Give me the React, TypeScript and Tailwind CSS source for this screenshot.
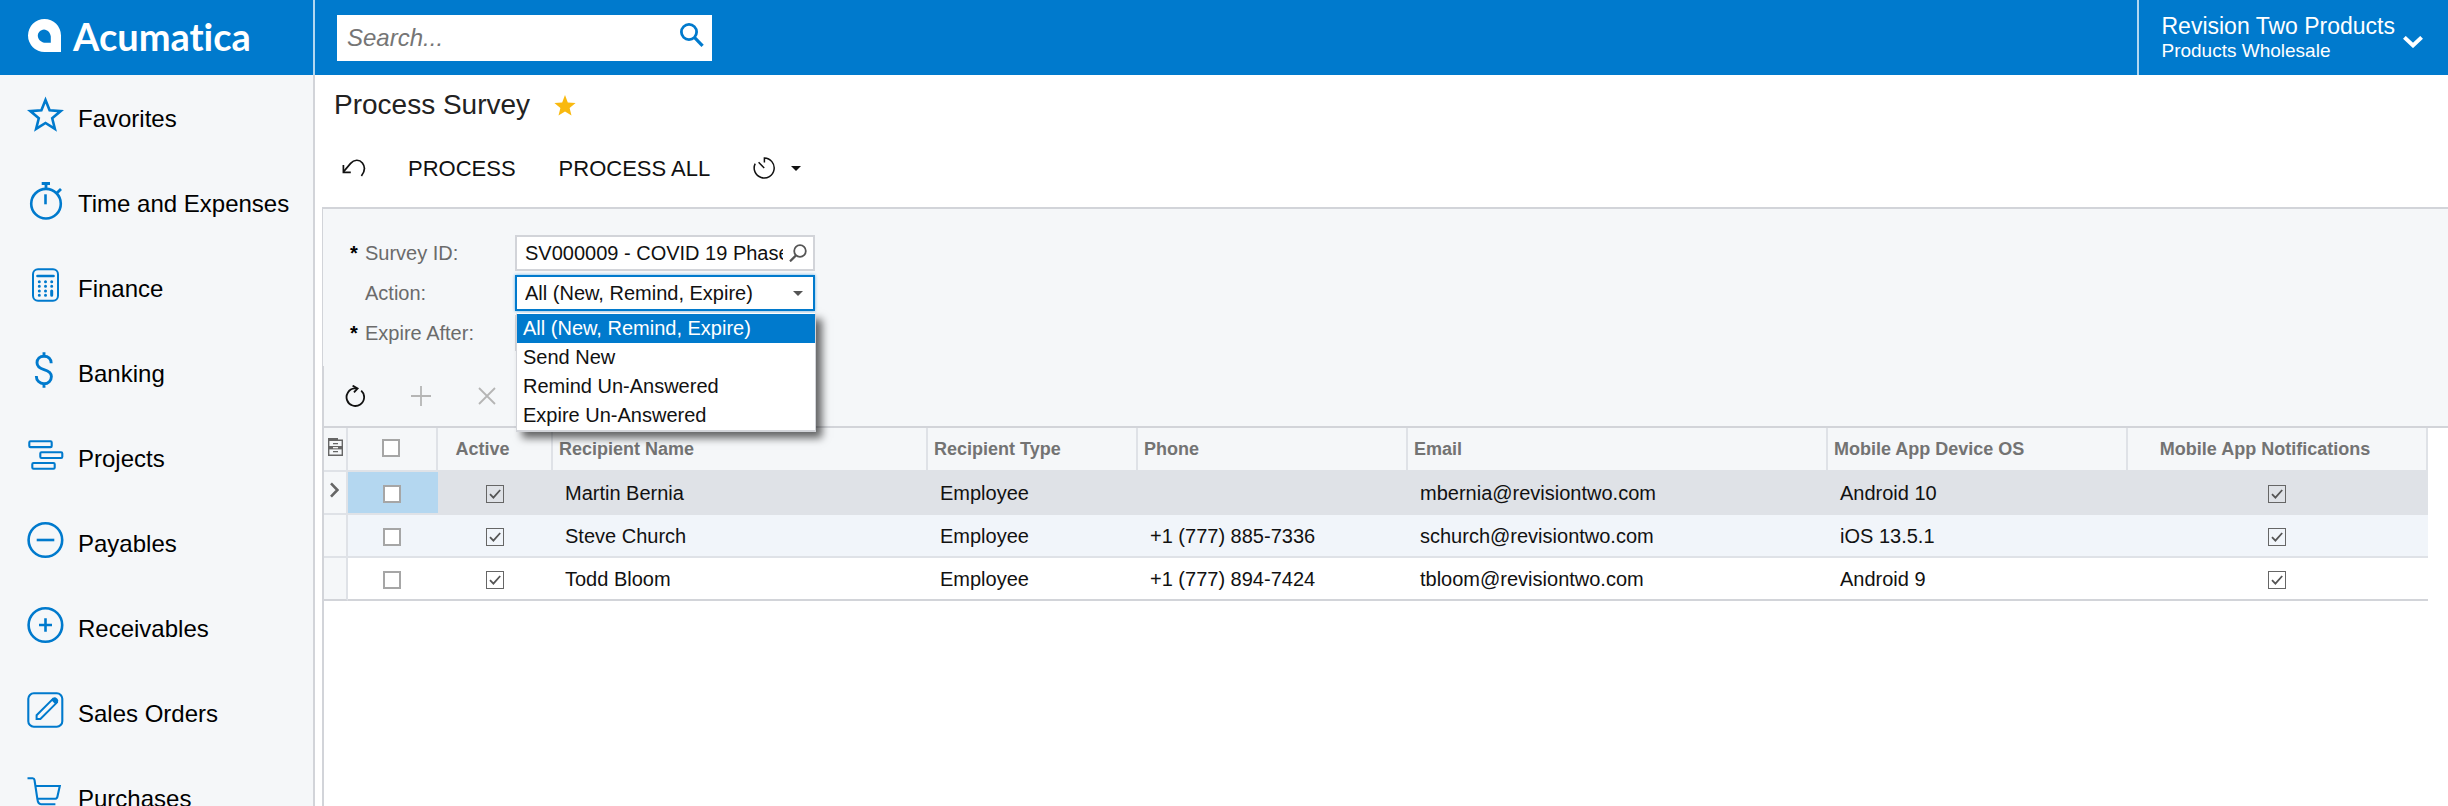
import { useState, type ReactNode } from "react";

type NavItem = { label: string; icon: ReactNode };

const navItems: NavItem[] = [
  {
    label: "Favorites",
    icon: (
      <path
        strokeWidth="2.6"
        strokeMiterlimit="10"
        d="M18.5 4L22.6 14.3L33.7 15.1L25.2 22.2L27.9 32.9L18.5 27L9.1 32.9L11.8 22.2L3.3 15.1L14.4 14.3Z"
      />
    ),
  },
  {
    label: "Time and Expenses",
    icon: (
      <>
        <circle cx="19" cy="22.7" r="14.8" />
        <path d="M14.7 2.5H23M19 2.5V8M29.7 12.3L34 8" strokeWidth="2.8" />
        <path d="M18.5 13.3V23.3" />
      </>
    ),
  },
  {
    label: "Finance",
    icon: (
      <>
        <rect x="6" y="3.3" width="25" height="31.4" rx="5" strokeWidth="2" />
        <path d="M10.5 10H26.5" strokeLinecap="round" />
        <path
          d="M12.3 15.7h.01M18.5 15.7h.01M24.7 15.7h.01M12.3 20.3h.01M18.5 20.3h.01M24.7 20.3h.01M12.3 24.9h.01M18.5 24.9h.01M24.7 24.9v4.4M12.3 29.3h.01M18.5 29.3h.01"
          strokeWidth="3"
          strokeLinecap="round"
        />
      </>
    ),
  },
  {
    label: "Banking",
    icon: (
      <path
        strokeWidth="2.9"
        d="M24.2 12.3C24.2 8 21.3 5.2 17 5.2S10 8 10 11.8C10 15.8 13 17.4 17 18.6S24.4 21.6 24.4 25.6S21.3 32.8 17 32.8S9.3 29.5 9.3 25M17 1.3V5.2M17 32.8V36.7"
      />
    ),
  },
  {
    label: "Projects",
    icon: (
      <g strokeWidth="2.1">
        <rect x="2.3" y="5.3" width="22.4" height="5.8" rx="1.2" />
        <rect x="13.3" y="16.2" width="22" height="5.8" rx="1.2" />
        <rect x="5.3" y="27" width="22.4" height="5.8" rx="1.2" />
      </g>
    ),
  },
  {
    label: "Payables",
    icon: (
      <>
        <circle cx="18.4" cy="19" r="16.8" />
        <path d="M9.7 19H27.3" />
      </>
    ),
  },
  {
    label: "Receivables",
    icon: (
      <>
        <circle cx="18.4" cy="19" r="16.8" />
        <path d="M12 19H25M18.5 12.3V25.7" />
      </>
    ),
  },
  {
    label: "Sales Orders",
    icon: (
      <>
        <rect x="1.3" y="2.3" width="34" height="33.4" rx="5.5" strokeWidth="2.1" />
        <path d="M9.6 28V24.2L26 7.8L29.8 11.6L13.4 28Z" strokeWidth="2" />
        <path d="M24.2 9L26.6 6.6Q28.2 5.6 29.8 7.2L30.6 8Q32 9.8 30.8 11.2L28.6 13.4Z" fill="currentColor" stroke="none" />
      </>
    ),
  },
  {
    label: "Purchases",
    icon: (
      <path
        strokeWidth="2.1"
        d="M.5 2.3H5.6Q7.2 2.3 7.5 4L10.4 23.2Q11 28.2 14 28.2H28.4M8.3 10H32.8L30.4 20.8Q30 22.8 28 22.8H10.3"
      />
    ),
  },
];

const actions = ["All (New, Remind, Expire)", "Send New", "Remind Un-Answered", "Expire Un-Answered"];

const recipients = [
  { name: "Martin Bernia", type: "Employee", phone: "", email: "mbernia@revisiontwo.com", os: "Android 10" },
  { name: "Steve Church", type: "Employee", phone: "+1 (777) 885-7336", email: "schurch@revisiontwo.com", os: "iOS 13.5.1" },
  { name: "Todd Bloom", type: "Employee", phone: "+1 (777) 894-7424", email: "tbloom@revisiontwo.com", os: "Android 9" },
];

const rowStyles = [
  "bg-[#dfe2e7] border-[#dfe2e7]",
  "bg-[#f1f5fa] border-[#dfe2e7]",
  "bg-white border-[#d2d4d9]",
];

function CheckBox({ label, checked = false }: { label: string; checked?: boolean }) {
  const [on, setOn] = useState(checked);
  return (
    <label className="mr-[2px] inline-grid size-[18px] align-middle">
      <input
        type="checkbox"
        aria-label={label}
        checked={on}
        onChange={() => setOn(!on)}
        className="col-start-1 row-start-1 size-[18px] appearance-none border-2 border-[#a6a6a6] bg-white checked:border checked:border-[#666] checked:bg-transparent"
      />
      {on && (
        <svg viewBox="0 0 18 18" className="pointer-events-none col-start-1 row-start-1 size-[18px]" fill="none" stroke="#555" strokeWidth="1.8">
          <path d="M4 9.2L7.4 12.6L14.2 5" />
        </svg>
      )}
    </label>
  );
}

function Header() {
  return (
    <header className="flex h-[75px] shrink-0 bg-[#007acd] text-white">
      <a href="#home" className="flex w-[315px] shrink-0 items-center gap-3 border-r-2 border-[#b2d7f0] pb-1 pl-7">
        <svg viewBox="0 0 33 33" className="size-[33px]" fill="currentColor" fillRule="evenodd">
          <path d="M16.5 0A16.5 16.5 0 0 1 33 16.5V33H16.5A16.5 16.5 0 0 1 16.5 0ZM16 10.5C12.3 11 10 13.5 9.8 16.5C9.8 20 12.5 23.2 16.5 23.7H22.8V17.5C22.3 13.3 19.5 10.8 16 10.5Z" />
        </svg>
        <span className="font-[Lato] text-[38px] leading-[48px] font-bold [font-variant-ligatures:none]">Acumatica</span>
      </a>
      <div className="flex flex-1 items-center pl-[22px]">
        <form className="flex h-[46px] w-[375px] items-center bg-white" onSubmit={(e) => e.preventDefault()}>
          <input
            type="text"
            aria-label="Search"
            placeholder="Search..."
            className="h-full min-w-0 flex-1 pl-[10px] text-2xl text-black italic outline-none placeholder:text-[#757575]"
          />
          <button type="submit" aria-label="Search" className="mr-2 mb-[6px] text-[#007acd]">
            <svg viewBox="0 0 24 24" className="size-6" fill="none" stroke="currentColor">
              <circle cx="9" cy="9" r="7.6" strokeWidth="2.8" />
              <path d="M14.4 14.4L22.6 22.8" strokeWidth="3.2" />
            </svg>
          </button>
        </form>
      </div>
      <button type="button" className="flex shrink-0 gap-2 border-l-2 border-[#b2d7f0] pr-[25px] pl-[22px] text-left">
        <span className="flex flex-col pt-3">
          <span className="text-[23px] leading-7">Revision Two Products</span>
          <span className="text-[19px] leading-[22px]">Products Wholesale</span>
        </span>
        <svg viewBox="0 0 20 12" className="mt-9 h-3 w-5" fill="none" stroke="currentColor" strokeWidth="4">
          <path d="M1.4 1.4L10 9.4L18.6 1.4" />
        </svg>
      </button>
    </header>
  );
}

function Sidebar() {
  return (
    <nav className="w-[315px] shrink-0 overflow-hidden border-r-2 border-[#d2d4d9] bg-[#f5f7f9]">
      <ul>
        {navItems.map((item) => (
          <li key={item.label}>
            <a href={"#" + item.label.replace(/ /g, "-").toLowerCase()} className="flex h-[85px] items-start gap-[15px] pt-[21px] pl-[27px]">
              <svg viewBox="0 0 36 38" className="h-[38px] w-9 shrink-0 overflow-visible text-[#007acd]" fill="none" stroke="currentColor" strokeWidth="2.6">
                {item.icon}
              </svg>
              <span className="text-2xl leading-[46px] text-black">{item.label}</span>
            </a>
          </li>
        ))}
      </ul>
    </nav>
  );
}

function FieldLabel({ htmlFor, required, children }: { htmlFor: string; required?: boolean; children: ReactNode }) {
  return (
    <label htmlFor={htmlFor} className="flex w-[165px] shrink-0 text-xl text-[#6b6b6b]">
      <span className="w-[15px] shrink-0 font-bold text-black">{required ? "*" : ""}</span>
      {children}
    </label>
  );
}

function Filters() {
  const [action, setAction] = useState(actions[0]);
  return (
    <section className="flex h-[157px] flex-col gap-1 border-l border-[#d2d4d9] bg-[#f5f7f9] pt-[26px] pl-[27px]">
      <div className="flex items-center">
        <FieldLabel htmlFor="survey" required>Survey ID:</FieldLabel>
        <div className="flex h-9 w-[300px] items-center border-2 border-[#d2d4d9] bg-white pr-[6px]">
          <input
            id="survey"
            type="text"
            defaultValue="SV000009 - COVID 19 Phase"
            className="mr-[6px] ml-2 min-w-0 flex-1 text-xl text-[#111] outline-none"
          />
          <button type="button" aria-label="Look up survey" className="text-[#555]">
            <svg viewBox="0 0 18 18" className="size-[18px]" fill="none" stroke="currentColor" strokeWidth="1.8">
              <circle cx="11" cy="7" r="5.8" />
              <path d="M7 11.4L1 17.4" strokeWidth="2.2" />
            </svg>
          </button>
        </div>
      </div>
      <div className="flex items-center">
        <FieldLabel htmlFor="action">Action:</FieldLabel>
        <div className="relative flex h-9 w-[300px] items-center border-2 border-[#007acd] bg-white shadow-[0_0_3px_#66b2e6]">
          <select
            id="action"
            value={action}
            onChange={(e) => setAction(e.target.value)}
            className="h-full w-full appearance-none pl-2 text-xl text-[#111] outline-none"
          >
            {actions.map((a) => (
              <option key={a}>{a}</option>
            ))}
          </select>
          <svg viewBox="0 0 10 5" className="pointer-events-none absolute right-[10px] h-[5px] w-[10px]" fill="#555">
            <path d="M0 0H10L5 5Z" />
          </svg>
          <ul
            role="listbox"
            aria-label="Action options"
            className="absolute top-9 -left-px z-10 w-[300px] border border-b-2 border-[#d2d4d9] border-t-white bg-white text-xl leading-[29px] text-[#111] shadow-[6px_6px_8px_rgba(0,0,0,0.6)]"
          >
            {actions.map((a) => (
              <li
                key={a}
                role="option"
                aria-selected={a === action}
                onClick={() => setAction(a)}
                className="px-[6px] whitespace-nowrap aria-selected:bg-[#007acd] aria-selected:text-white"
              >
                {a}
              </li>
            ))}
          </ul>
        </div>
      </div>
      <div className="flex items-center">
        <FieldLabel htmlFor="expire" required>Expire After:</FieldLabel>
        <input id="expire" type="text" className="h-9 w-[300px] border-2 border-[#d2d4d9] bg-white px-2 text-xl outline-none" />
      </div>
    </section>
  );
}

function GridToolbar() {
  return (
    <div className="flex h-[60px] items-center gap-[46px] bg-[#f5f7f9] pb-px pl-[21px]">
      <button type="button" aria-label="Refresh" className="text-[#111]">
        <svg viewBox="0 0 20 22" className="h-[22px] w-5" fill="none" stroke="currentColor" strokeWidth="1.8">
          <path d="M16.2 5.6A8.8 8.8 0 1 1 9.6 3.4H12" />
          <path d="M7.6 .6L12.6 3.4L9 7.4" />
        </svg>
      </button>
      <button type="button" aria-label="Add row" className="text-[#b5b5b5]">
        <svg viewBox="0 0 20 20" className="size-5" fill="none" stroke="currentColor" strokeWidth="1.8">
          <path d="M10 0V20M0 10H20" />
        </svg>
      </button>
      <button type="button" aria-label="Delete row" className="text-[#b5b5b5]">
        <svg viewBox="0 0 20 20" className="size-5" fill="none" stroke="currentColor" strokeWidth="1.8">
          <path d="M2 2L18 18M18 2L2 18" />
        </svg>
      </button>
    </div>
  );
}

function RecipientsTable() {
  return (
    <div className="border-t-2 border-[#d2d4d9] pr-5">
      <table className="w-full table-fixed border-separate border-spacing-0 text-left">
        <colgroup>
          <col className="w-6" />
          <col className="w-[90px]" />
          <col className="w-[115px]" />
          <col className="w-[375px]" />
          <col className="w-[210px]" />
          <col className="w-[270px]" />
          <col className="w-[420px]" />
          <col className="w-[300px]" />
          <col />
        </colgroup>
        <thead>
          <tr className="h-11 bg-[#f5f7f9] text-lg text-[#737373] *:border-r-2 *:border-b-2 *:border-[#dfe2e7] *:p-0 *:font-bold">
            <th aria-label="Row notes">
              <svg viewBox="0 0 15 18" className="mb-1 ml-1 h-[18px] w-[15px]" fill="none" stroke="#666" strokeWidth="1.4">
                <path d="M0 0H10V3H0Z" fill="#666" stroke="none" />
                <path d="M.7 2.2H14.3V17.3H.7ZM5 5.6H10M5 13.6H10" />
                <path d="M1 8H14V11.4H1Z" fill="#666" stroke="none" />
                <path d="M5 9.7H10" stroke="#fff" strokeWidth="1.2" />
              </svg>
            </th>
            <th className="text-center leading-none"><div className="pb-1"><CheckBox label="Select all" /></div></th>
            <th><div className="pr-6 text-center">Active</div></th>
            <th><div className="pl-[6px]">Recipient Name</div></th>
            <th><div className="pl-[6px]">Recipient Type</div></th>
            <th><div className="pl-[6px]">Phone</div></th>
            <th><div className="pl-[6px]">Email</div></th>
            <th><div className="pl-[6px]">Mobile App Device OS</div></th>
            <th><div className="pr-6 text-center">Mobile App Notifications</div></th>
          </tr>
        </thead>
        <tbody>
          {recipients.map((r, i) => (
            <tr key={r.name} className={"h-[43px] text-xl text-[#111] *:border-b-2 *:border-inherit *:p-0 " + rowStyles[i]}>
              <td className="border-r-2 border-r-[#dfe2e7]! bg-[#f5f7f9] leading-none">
                {i === 0 && (
                  <svg viewBox="0 0 9 16" className="mb-[6px] ml-[6px] h-4 w-[9px]" fill="none" stroke="#666" strokeWidth="2.6">
                    <path d="M1 1.4L7.4 8L1 14.6" />
                  </svg>
                )}
              </td>
              <td className={"text-center leading-none " + (i === 0 ? "bg-[#b4d7f0]" : "")}><CheckBox label={"Select " + r.name} /></td>
              <td className="text-center leading-none"><CheckBox label={r.name + " active"} checked /></td>
              <td><div className="pl-3">{r.name}</div></td>
              <td><div className="pl-3">{r.type}</div></td>
              <td><div className="pl-3">{r.phone}</div></td>
              <td><div className="pl-3">{r.email}</div></td>
              <td><div className="pl-3">{r.os}</div></td>
              <td className="text-center leading-none"><CheckBox label={r.name + " notifications"} checked /></td>
            </tr>
          ))}
        </tbody>
      </table>
    </div>
  );
}

export default function App() {
  return (
    <div className="flex h-screen flex-col overflow-hidden bg-white font-['Liberation_Sans',Arial,sans-serif]">
      <Header />
      <div className="flex min-h-0 flex-1">
        <Sidebar />
        <main className="flex min-w-0 flex-1 flex-col pl-[7px]">
          <div className="flex h-[60px] items-center gap-6 pl-3">
            <h1 className="text-[28px] leading-9 text-[#222]">Process Survey</h1>
            <button type="button" aria-label="Remove from favorites" className="text-[#f9b90f]">
              <svg viewBox="0 0 22 21" className="h-[21px] w-[22px]" fill="currentColor">
                <path d="M11 0L13.8 7.4L21.6 7.9L15.6 12.9L17.5 20.5L11 16.4L4.5 20.5L6.4 12.9L.4 7.9L8.2 7.4Z" />
              </svg>
            </button>
          </div>
          <div className="flex h-[74px] items-center border-b-2 border-[#d2d4d9] pb-[6px] pl-5 text-[22px] text-[#111]">
            <button type="button" aria-label="Undo">
              <svg viewBox="0 0 24 18" className="h-[18px] w-6" fill="none" stroke="currentColor" strokeWidth="1.7">
                <path d="M1.6 12.6L8.6 4.4C12 .4 17.4 .2 20.4 4C23.2 7.6 22.8 12.6 19.4 17" />
                <path d="M1.4 6V13.4H8.8" />
              </svg>
            </button>
            <button type="button" className="ml-[42px]">PROCESS</button>
            <button type="button" className="ml-[43px]">PROCESS ALL</button>
            <button type="button" aria-label="Schedules" className="ml-[43px] flex items-center gap-4">
              <svg viewBox="0 0 22 22" className="size-[22px]" fill="none" stroke="currentColor" strokeWidth="1.5">
                <path d="M11.4 5.4V1A10 10 0 1 1 2.2 6.6M5.6 5.2L11.2 11" />
              </svg>
              <svg viewBox="0 0 10 5" className="h-[5px] w-[10px]" fill="currentColor">
                <path d="M0 0H10L5 5Z" />
              </svg>
            </button>
          </div>
          <Filters />
          <section className="flex-1 border-l-2 border-[#d2d4d9]">
            <GridToolbar />
            <RecipientsTable />
          </section>
        </main>
      </div>
    </div>
  );
}
